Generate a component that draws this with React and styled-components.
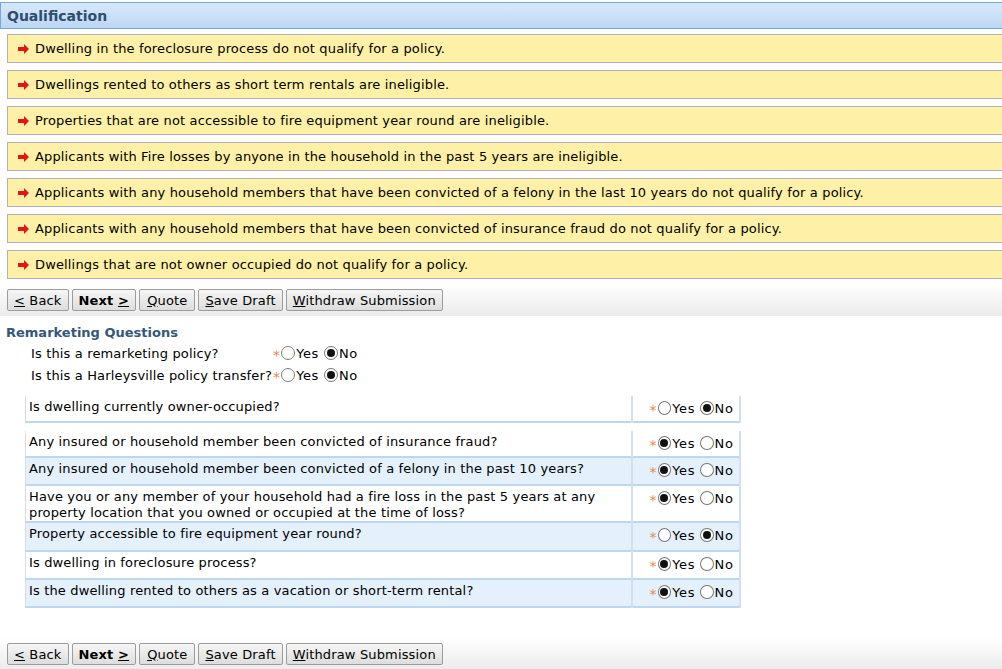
import React from 'react';
import styled, { createGlobalStyle } from 'styled-components';

const GlobalStyle = createGlobalStyle`
  body {
    margin: 0;
    background: #ffffff;
    font-family: 'DejaVu Sans', Verdana, sans-serif;
    font-size: 13px;
    letter-spacing: 0.15px;
    color: #000;
  }
`;

const Page = styled.div`
  padding-top: 2px;
  overflow: hidden;
`;

const Header = styled.div`
  height: 25px;
  display: flex;
  align-items: center;
  padding-left: 6px;
  border: 1px solid #74a8da;
  border-right: none;
  background: linear-gradient(#d8e8f9, #bcd7f3);
  font-weight: bold;
  font-size: 14px;
  letter-spacing: 0;
  color: #2e4d72;
`;

const Notices = styled.div`
  display: flex;
  flex-direction: column;
  gap: 7px;
  padding: 5px 0 0 7px;
`;

const Notice = styled.div`
  height: 27px;
  display: flex;
  align-items: center;
  gap: 5px;
  padding-left: 10px;
  border: 1px solid #adb3bb;
  border-right: none;
  background: #fef1a7;
`;

const Toolbar = styled.div`
  display: flex;
  gap: 3px;
  padding: 5px 7px 5px;
  margin-top: ${p => p.top || 0}px;
  background: linear-gradient(#ffffff, #ebebeb);
`;

const Button = styled.button`
  height: 22px;
  padding: 0 ${p => p.pad || 6}px;
  font-family: 'DejaVu Sans', Verdana, sans-serif;
  font-size: 13px;
  letter-spacing: 0.15px;
  font-weight: ${p => (p.bold ? 'bold' : 'normal')};
  color: #000;
  border: 1px solid #9c9c9c;
  border-radius: 2px;
  background: linear-gradient(#f6f6f6, #dddddd);
  u { text-decoration: underline; }
`;

const SectionTitle = styled.div`
  margin: 9px 0 0 6px;
  font-weight: bold;
  font-size: 13px;
  letter-spacing: 0;
  color: #35577b;
`;

const Remarketing = styled.div`
  display: grid;
  grid-template-columns: max-content auto;
  row-gap: 6px;
  align-items: center;
  padding: 5px 0 0 31px;
`;

const Choice = styled.div`
  display: flex;
  align-items: center;
`;

const Star = styled.span`
  color: #e8894a;
  font-size: 14px;
  margin: 0 1px 0 1px;
  position: relative;
  top: 2px;
`;

const RadioCircle = styled.span`
  width: 14px;
  height: 14px;
  box-sizing: border-box;
  border: 1px solid #7a7a7a;
  border-radius: 50%;
  background: #fff;
  display: inline-flex;
  align-items: center;
  justify-content: center;
  &::after {
    content: '';
    width: 8px;
    height: 8px;
    border-radius: 50%;
    background: ${p => (p.checked ? '#111' : 'transparent')};
  }
`;

const RadioLabel = styled.span`
  margin: 0 5px 0 1px;
  letter-spacing: 0.6px;
`;

const Table = styled.table`
  border-collapse: collapse;
  table-layout: fixed;
  width: 714px;
  margin-left: 25px;
  margin-top: ${p => p.top || 0}px;
`;

const Row = styled.tr`
  background: ${p => (p.shade ? '#e4f0fc' : '#ffffff')};
  border-bottom: 2px solid #bdd7f0;
`;

const QCell = styled.td`
  width: 606px;
  padding: 3px 3px 0;
  height: ${p => p.h}px;
  box-sizing: border-box;
  vertical-align: top;
  line-height: 16px;
  border-left: 1px solid #dcdcdc;
`;

const ACell = styled.td`
  width: 108px;
  box-sizing: border-box;
  padding: 4px 0 0 16px;
  border-left: 2px solid #cfe0f0;
  border-right: 2px solid #cfe0f0;
  vertical-align: top;
`;

const Arrow = () => (
  <svg width="12" height="10" viewBox="0 0 12 10">
    <polygon points="0,3 6,3 6,0 11,5 6,10 6,7 0,7" fill="#ea1219" />
  </svg>
);

const YesNo = ({ yes }) => (
  <Choice>
    <Star>*</Star>
    <RadioCircle checked={yes} />
    <RadioLabel>Yes</RadioLabel>
    <RadioCircle checked={!yes} />
    <RadioLabel>No</RadioLabel>
  </Choice>
);

const notices = [
  'Dwelling in the foreclosure process do not qualify for a policy.',
  'Dwellings rented to others as short term rentals are ineligible.',
  'Properties that are not accessible to fire equipment year round are ineligible.',
  'Applicants with Fire losses by anyone in the household in the past 5 years are ineligible.',
  'Applicants with any household members that have been convicted of a felony in the last 10 years do not qualify for a policy.',
  'Applicants with any household members that have been convicted of insurance fraud do not qualify for a policy.',
  'Dwellings that are not owner occupied do not qualify for a policy.',
];

const questions = [
  { q: 'Any insured or household member been convicted of insurance fraud?', yes: true, h: 26 },
  { q: 'Any insured or household member been convicted of a felony in the past 10 years?', yes: true, h: 28, shade: true },
  { q: 'Have you or any member of your household had a fire loss in the past 5 years at any property location that you owned or occupied at the time of loss?', yes: true, h: 36 },
  { q: 'Property accessible to fire equipment year round?', yes: false, h: 29, shade: true },
  { q: 'Is dwelling in foreclosure process?', yes: true, h: 28 },
  { q: 'Is the dwelling rented to others as a vacation or short-term rental?', yes: true, h: 28, shade: true },
];

const Buttons = ({ top }) => (
  <Toolbar top={top}>
    <Button><u>&lt;</u> Back</Button>
    <Button bold>Next <u>&gt;</u></Button>
    <Button pad={7}><u>Q</u>uote</Button>
    <Button><u>S</u>ave Draft</Button>
    <Button><u>W</u>ithdraw Submission</Button>
  </Toolbar>
);

export default function App() {
  return (
    <Page>
      <GlobalStyle />
      <Header>Qualification</Header>
      <Notices>
        {notices.map(n => (
          <Notice key={n}>
            <Arrow />
            <span>{n}</span>
          </Notice>
        ))}
      </Notices>
      <Buttons top={5} />
      <SectionTitle>Remarketing Questions</SectionTitle>
      <Remarketing>
        <span>Is this a remarketing policy?</span>
        <YesNo yes={false} />
        <span>Is this a Harleysville policy transfer?</span>
        <YesNo yes={false} />
      </Remarketing>
      <Table top={13}>
        <tbody>
          <Row>
            <QCell h={26}>Is dwelling currently owner-occupied?</QCell>
            <ACell><YesNo yes={false} /></ACell>
          </Row>
        </tbody>
      </Table>
      <Table top={8}>
        <tbody>
          {questions.map(r => (
            <Row key={r.q} shade={r.shade}>
              <QCell h={r.h}>{r.q}</QCell>
              <ACell><YesNo yes={r.yes} /></ACell>
            </Row>
          ))}
        </tbody>
      </Table>
      <Buttons top={30} />
    </Page>
  );
}
